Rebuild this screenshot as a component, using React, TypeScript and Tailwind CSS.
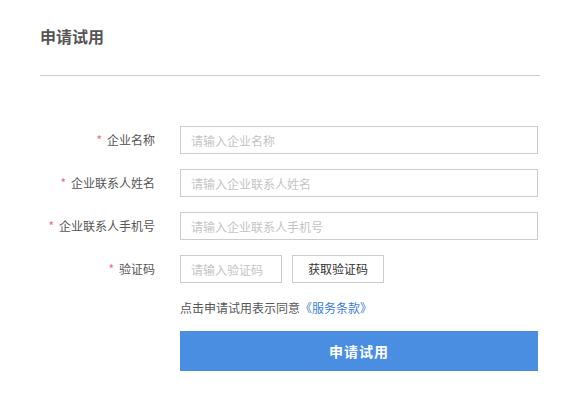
import React from "react";

const font = { fontFamily: '"Noto Sans CJK SC", "Noto Sans", sans-serif' };

function Row({ label, children }: { label: string; children: React.ReactNode }) {
  return (
    <div className="flex items-center h-[28px]">
      <div className="w-[115px] flex justify-end items-center text-[12px] text-[#555] leading-none">
        <span className="text-[#f0688a] mr-[5px]">*</span>
        <span>{label}</span>
      </div>
      <div className="ml-[25px] flex items-center">{children}</div>
    </div>
  );
}

export default function App() {
  return (
    <div className="w-[585px] h-[410px] bg-white" style={font}>
      <div className="pl-[40px] pt-[24px] w-[540px]">
        <div className="text-[16px] leading-[24px] font-semibold text-[#555] h-[51px]">申请试用</div>
        <div className="h-px bg-[#cccccc]" />
        <div className="mt-[50px] flex flex-col gap-[15px]">
          <Row label="企业名称">
            <input
              className="w-[358px] h-[28px] border border-[#cccccc] px-[10px] text-[12px] outline-none placeholder:text-[#c4c4c4]"
              placeholder="请输入企业名称"
            />
          </Row>
          <Row label="企业联系人姓名">
            <input
              className="w-[358px] h-[28px] border border-[#cccccc] px-[10px] text-[12px] outline-none placeholder:text-[#c4c4c4]"
              placeholder="请输入企业联系人姓名"
            />
          </Row>
          <Row label="企业联系人手机号">
            <input
              className="w-[358px] h-[28px] border border-[#cccccc] px-[10px] text-[12px] outline-none placeholder:text-[#c4c4c4]"
              placeholder="请输入企业联系人手机号"
            />
          </Row>
          <Row label="验证码">
            <input
              className="w-[102px] h-[28px] border border-[#cccccc] px-[10px] text-[12px] outline-none placeholder:text-[#c4c4c4]"
              placeholder="请输入验证码"
            />
            <button className="ml-[10px] w-[92px] h-[28px] border border-[#cccccc] text-[12px] text-[#333] bg-white">
              获取验证码
            </button>
          </Row>
        </div>
        <div className="ml-[140px] mt-[17px] text-[12px] leading-[16px] text-[#555]">
          点击申请试用表示同意<span className="text-[#3b7dd8]">《服务条款》</span>
        </div>
        <button className="ml-[140px] mt-[15px] w-[358px] h-[40px] bg-[#4a8ee2] text-white text-[14px] font-bold tracking-[1px]">
          申请试用
        </button>
      </div>
    </div>
  );
}
